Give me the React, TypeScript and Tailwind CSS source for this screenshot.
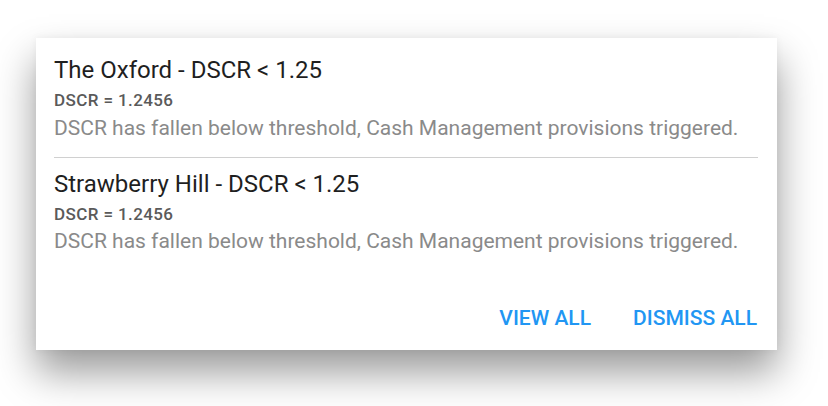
import React from "react";

type Alert = {
  title: string;
  value: string;
  message: string;
};

const alerts: Alert[] = [
  {
    title: "The Oxford - DSCR < 1.25",
    value: "DSCR = 1.2456",
    message: "DSCR has fallen below threshold, Cash Management provisions triggered.",
  },
  {
    title: "Strawberry Hill - DSCR < 1.25",
    value: "DSCR = 1.2456",
    message: "DSCR has fallen below threshold, Cash Management provisions triggered.",
  },
];

const AlertItem: React.FC<{ alert: Alert }> = ({ alert }) => {
  return (
    <div>
      <h3 className="text-[24px] leading-[28px] text-[#1f1f1f]">{alert.title}</h3>
      <p className="mt-[6px] text-[17px] leading-[20px] tracking-[0.4px] font-medium text-[#5a5a5a]">{alert.value}</p>
      <p className="mt-[5.5px] text-[21px] leading-[24px] text-[#8a8a8a]">{alert.message}</p>
    </div>
  );
};

const App: React.FC = () => {
  return (
    <div className="min-h-screen bg-white pt-[38px] pl-[36px] font-['Roboto',sans-serif]">
      <div className="w-[741px] h-[312px] bg-white flex flex-col px-[18px] pt-[18px] pb-[20px] shadow-[0_22px_38px_rgba(0,0,0,0.4),0_0_8px_rgba(0,0,0,0.05)]">
        <AlertItem alert={alerts[0]} />
        <div className="mt-[17px] mb-[12px] h-px bg-[#d0d0d0] mr-[1px]" />
        <AlertItem alert={alerts[1]} />
        <div className="mt-auto flex justify-end gap-[42px] pr-[2px]">
          <button className="text-[21px] leading-[24px] font-medium text-[#2196f3]">VIEW ALL</button>
          <button className="text-[21px] leading-[24px] font-medium text-[#2196f3]">DISMISS ALL</button>
        </div>
      </div>
    </div>
  );
};

export default App;
